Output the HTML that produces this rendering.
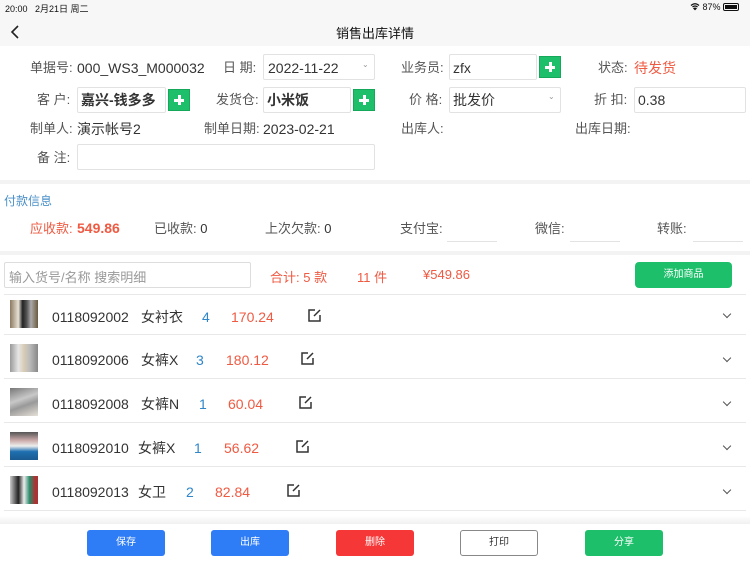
<!DOCTYPE html>
<html><head><meta charset="utf-8"><style>
*{margin:0;padding:0;box-sizing:border-box}
body{width:750px;height:562px;position:relative;background:#fff;font-family:"Liberation Sans","Noto Sans CJK SC",sans-serif;color:#333;overflow:hidden}
.a{position:absolute;white-space:nowrap}
.l{font-size:13px;color:#555;line-height:16px}
.v{font-size:14px;color:#333;line-height:16px}
.box{position:absolute;border:1px solid #e2e2e2;background:#fff;border-radius:2px}
.plus{position:absolute;width:22px;height:22px;background:#1dbf6a;border:1px solid #15a85a}
.plus:before{content:"";position:absolute;left:5px;top:9px;width:10px;height:3px;background:#fff}
.plus:after{content:"";position:absolute;left:9px;top:5px;width:3px;height:10px;background:#fff}
.band{position:absolute;left:0;width:750px;background:#f3f3f3}
.sep{position:absolute;left:4px;width:742px;height:1px;background:#e8e8e8}
.ul{position:absolute;height:1px;background:#e3e3e3;width:50px}
.th{position:absolute;left:10px;width:28px;height:28px}
.row{font-size:14px;line-height:16px}
.blue{color:#2f86c9}.red{color:#ef5a42}
.btn{position:absolute;top:530px;width:78px;height:26px;border-radius:3px;color:#fff;font-size:10px;text-align:center;line-height:26px}
.chev{position:absolute;left:724px;width:6px;height:6px;border-right:1.2px solid #555;border-bottom:1.2px solid #555;transform:rotate(45deg)}
</style></head><body>
<div class="a" style="left:0;top:0;width:750px;height:46px;background:#f7f7f7"></div>
<div class="a" style="left:5px;top:2px;font-size:9px;color:#111">20:00&nbsp;&nbsp; 2月21日 周二</div>
<div class="a" style="left:690px;top:2px;font-size:9px;color:#111">
<svg width="10" height="9" viewBox="0 0 10 9" style="vertical-align:-1px"><path d="M1 3.5Q5 0 9 3.5M2.5 5Q5 3 7.5 5M4 6.5Q5 5.8 6 6.5L5 7.5Z" stroke="#111" stroke-width="1.3" fill="none"/></svg>&nbsp;87%&nbsp;<span style="display:inline-block;width:16px;height:8px;border:1px solid #111;border-radius:2px;vertical-align:-1px;padding:1px"><span style="display:block;width:12px;height:4px;background:#111"></span></span></div>
<svg class="a" style="left:10px;top:25px" width="10" height="14"><path d="M8 1L2 7L8 13" stroke="#222" stroke-width="1.6" fill="none"/></svg>
<div class="a" style="left:0;width:750px;top:23px;text-align:center;font-size:13px;color:#111">销售出库详情</div>

<div class="a l" style="left:30px;top:60px">单据号:</div>
<div class="a v" style="left:77px;top:60px">000_WS3_M000032</div>
<div class="a l" style="left:223px;top:60px">日 期:</div>
<div class="box" style="left:263px;top:54px;width:112px;height:26px"></div>
<div class="a v" style="left:268px;top:60px">2022-11-22</div>
<div class="a" style="left:362px;top:60px;font-size:8px;color:#999">⌄</div>
<div class="a l" style="left:401px;top:60px">业务员:</div>
<div class="box" style="left:449px;top:54px;width:88px;height:26px"></div>
<div class="a v" style="left:453px;top:60px">zfx</div>
<div class="plus" style="left:539px;top:56px"></div>
<div class="a l" style="left:598px;top:60px">状态:</div>
<div class="a v red" style="left:634px;top:60px">待发货</div>

<div class="a l" style="left:37px;top:92px">客 户:</div>
<div class="box" style="left:77px;top:87px;width:89px;height:26px"></div>
<div class="a v" style="left:81px;top:92px;font-weight:bold">嘉兴-钱多多</div>
<div class="plus" style="left:168px;top:89px"></div>
<div class="a l" style="left:216px;top:92px">发货仓:</div>
<div class="box" style="left:263px;top:87px;width:88px;height:26px"></div>
<div class="a v" style="left:267px;top:92px;font-weight:bold">小米饭</div>
<div class="plus" style="left:353px;top:89px"></div>
<div class="a l" style="left:409px;top:92px">价 格:</div>
<div class="box" style="left:449px;top:87px;width:112px;height:26px"></div>
<div class="a v" style="left:453px;top:92px">批发价</div>
<div class="a" style="left:548px;top:92px;font-size:8px;color:#999">⌄</div>
<div class="a l" style="left:594px;top:92px">折 扣:</div>
<div class="box" style="left:634px;top:87px;width:112px;height:26px"></div>
<div class="a v" style="left:638px;top:92px">0.38</div>

<div class="a l" style="left:30px;top:121px">制单人:</div>
<div class="a v" style="left:77px;top:121px">演示帐号2</div>
<div class="a l" style="left:204px;top:121px">制单日期:</div>
<div class="a v" style="left:263px;top:121px">2023-02-21</div>
<div class="a l" style="left:401px;top:121px">出库人:</div>
<div class="a l" style="left:575px;top:121px">出库日期:</div>

<div class="a l" style="left:37px;top:150px">备 注:</div>
<div class="box" style="left:77px;top:144px;width:298px;height:26px"></div>

<div class="band" style="top:180px;height:4px"></div>
<div class="a" style="left:4px;top:192px;font-size:12px;color:#4a90c8">付款信息</div>
<div class="a l red" style="left:30px;top:221px">应收款:</div>
<div class="a red" style="left:77px;top:220px;font-size:14px;font-weight:bold">549.86</div>
<div class="a l" style="left:154px;top:221px">已收款: <span style="color:#333">0</span></div>
<div class="a l" style="left:265px;top:221px">上次欠款: <span style="color:#333">0</span></div>
<div class="a l" style="left:400px;top:221px">支付宝:</div><div class="ul" style="left:447px;top:241px"></div>
<div class="a l" style="left:535px;top:221px">微信:</div><div class="ul" style="left:570px;top:241px"></div>
<div class="a l" style="left:657px;top:221px">转账:</div><div class="ul" style="left:693px;top:241px"></div>
<div class="band" style="top:251px;height:4px"></div>

<div class="box" style="left:4px;top:262px;width:247px;height:26px;border-color:#ddd"></div>
<div class="a" style="left:9px;top:267px;font-size:13px;color:#999">输入货号/名称 搜索明细</div>
<div class="a red" style="left:270px;top:267px;font-size:13px">合计: 5 款</div>
<div class="a red" style="left:357px;top:267px;font-size:13px">11 件</div>
<div class="a red" style="left:423px;top:267px;font-size:13px">¥549.86</div>
<div class="a" style="left:635px;top:262px;width:97px;height:26px;background:#1dbf6a;border-radius:4px;color:#fff;font-size:10px;text-align:center;line-height:26px">添加商品</div>

<div class="sep" style="top:294px"></div>
<div class="sep" style="top:334px"></div>
<div class="sep" style="top:378px"></div>
<div class="sep" style="top:422px"></div>
<div class="sep" style="top:466px"></div>
<div class="sep" style="top:510px"></div>

<div class="th" style="top:300px;background:linear-gradient(90deg,#8a7a60,#e8e2d6 30%,#222 45%,#555 60%,#aaa 75%,#6a5a40)"></div>
<div class="th" style="top:344px;background:linear-gradient(90deg,#999,#e6e6e6 30%,#d8ccb6 50%,#bbb 70%,#888)"></div>
<div class="th" style="top:388px;background:linear-gradient(160deg,#777,#c8c8c8 40%,#999 60%,#e6e0d8)"></div>
<div class="th" style="top:432px;background:linear-gradient(180deg,#555,#caa 30%,#eee 50%,#1e6fb0 70%,#1a5a90)"></div>
<div class="th" style="top:476px;background:linear-gradient(90deg,#ccc,#222 30%,#eee 50%,#2a8a6a 70%,#a33 90%)"></div>

<div class="a row" style="left:52px;top:309px">0118092002</div><div class="a row" style="left:141px;top:309px">女衬衣</div><div class="a row blue" style="left:202px;top:309px">4</div><div class="a row red" style="left:231px;top:309px">170.24</div>
<div class="a row" style="left:52px;top:352px">0118092006</div><div class="a row" style="left:141px;top:352px">女裤X</div><div class="a row blue" style="left:196px;top:352px">3</div><div class="a row red" style="left:226px;top:352px">180.12</div>
<div class="a row" style="left:52px;top:396px">0118092008</div><div class="a row" style="left:141px;top:396px">女裤N</div><div class="a row blue" style="left:199px;top:396px">1</div><div class="a row red" style="left:228px;top:396px">60.04</div>
<div class="a row" style="left:52px;top:440px">0118092010</div><div class="a row" style="left:138px;top:440px">女裤X</div><div class="a row blue" style="left:194px;top:440px">1</div><div class="a row red" style="left:224px;top:440px">56.62</div>
<div class="a row" style="left:52px;top:484px">0118092013</div><div class="a row" style="left:138px;top:484px">女卫</div><div class="a row blue" style="left:186px;top:484px">2</div><div class="a row red" style="left:215px;top:484px">82.84</div>

<svg class="a" style="left:307px;top:308px" width="15" height="15"><path d="M8 2H2V13H13V7M7 8L13 2" stroke="#333" stroke-width="1.5" fill="none"/></svg>
<svg class="a" style="left:300px;top:351px" width="15" height="15"><path d="M8 2H2V13H13V7M7 8L13 2" stroke="#333" stroke-width="1.5" fill="none"/></svg>
<svg class="a" style="left:298px;top:395px" width="15" height="15"><path d="M8 2H2V13H13V7M7 8L13 2" stroke="#333" stroke-width="1.5" fill="none"/></svg>
<svg class="a" style="left:295px;top:439px" width="15" height="15"><path d="M8 2H2V13H13V7M7 8L13 2" stroke="#333" stroke-width="1.5" fill="none"/></svg>
<svg class="a" style="left:286px;top:483px" width="15" height="15"><path d="M8 2H2V13H13V7M7 8L13 2" stroke="#333" stroke-width="1.5" fill="none"/></svg>

<div class="chev" style="top:311px"></div>
<div class="chev" style="top:355px"></div>
<div class="chev" style="top:399px"></div>
<div class="chev" style="top:443px"></div>
<div class="chev" style="top:487px"></div>

<div class="band" style="top:516px;height:8px;background:linear-gradient(#fff,#f0f0f0)"></div>
<div class="btn" style="left:87px;background:#2e7cf6">保存</div>
<div class="btn" style="left:211px;background:#2e7cf6">出库</div>
<div class="btn" style="left:336px;background:#f53737">删除</div>
<div class="btn" style="left:460px;background:#fff;border:1px solid #888;color:#333;line-height:24px">打印</div>
<div class="btn" style="left:585px;background:#1dbf6a">分享</div>
</body></html>
